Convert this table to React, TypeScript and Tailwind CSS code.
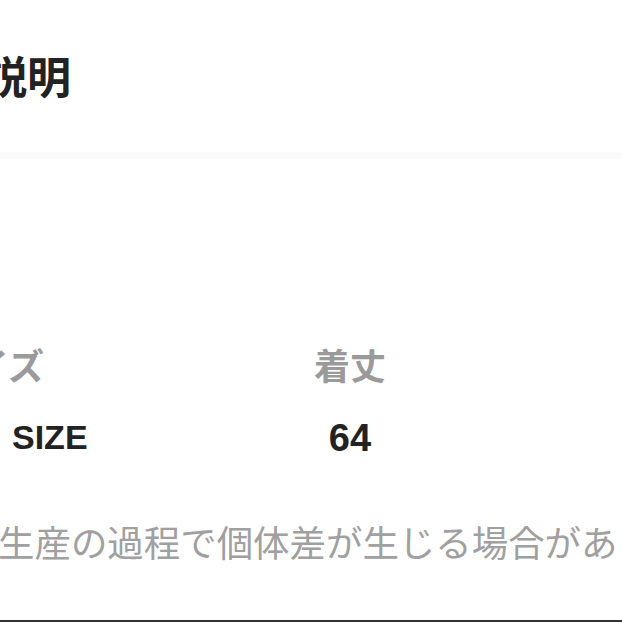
import React from "react";

const font = { fontFamily: '"Liberation Sans", "Noto Sans CJK JP", sans-serif' };

export default function App() {
  return (
    <div
      className="w-[622px] h-[622px] bg-white overflow-hidden flex flex-col"
      style={font}
    >
      {/* section title, cut on the left */}
      <div className="h-[152px] pt-[57px] whitespace-nowrap">
        <h2 className="-ml-[17px] text-[44px] leading-none font-bold text-[#222]">説明</h2>
      </div>
      <div className="h-[7px] bg-[#fafafa]" />

      {/* size table */}
      <div className="pt-[191px] grid grid-cols-[278px_144px] whitespace-nowrap">
        <div className="-ml-[27px] text-[36px] leading-none font-bold text-[#9a9a9a]">イズ</div>
        <div className="text-center text-[36px] leading-none font-bold text-[#9a9a9a]">着丈</div>
        <div className="pl-[12px] pt-[34px] text-[34px] leading-none font-bold text-[#222]">SIZE</div>
        <div className="pt-[33px] text-center text-[38px] leading-none font-bold text-[#222]">64</div>
      </div>

      {/* note */}
      <p className="mt-[70px] -ml-[2px] whitespace-nowrap text-[36.45px] leading-none text-[#a0a0a0]">
        生産の過程で個体差が生じる場合があり
      </p>

      <div className="mt-auto h-[2px] bg-[#333]" />
    </div>
  );
}
